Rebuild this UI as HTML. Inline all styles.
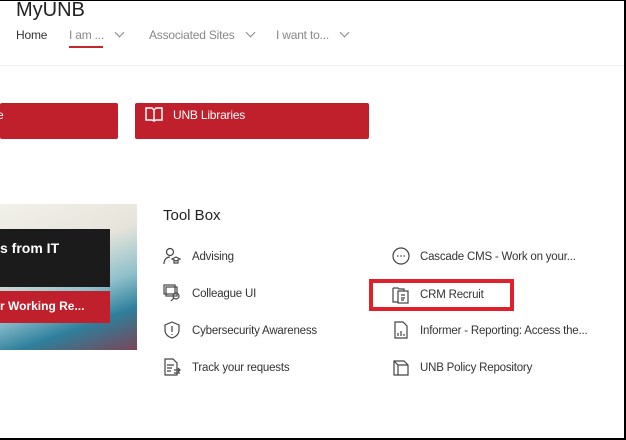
<!DOCTYPE html>
<html><head><style>
*{margin:0;padding:0;box-sizing:border-box}
body{width:626px;height:440px;overflow:hidden;background:#fff;font-family:"Liberation Sans",sans-serif;position:relative}
.frame{position:absolute;left:0;top:0;width:626px;height:440px;border:1px solid #000;border-left:none;border-right:2px solid #000;border-bottom:2px solid #000}
.a{position:absolute;white-space:nowrap}
.nav{font-size:12px;color:#888;top:28px;letter-spacing:-0.2px}
.chev{display:inline-block;width:7px;height:7px;border-right:1px solid #888;border-bottom:1px solid #888;transform:rotate(45deg);margin-left:12px;position:relative;top:-3px}
.it{font-size:11.5px;color:#333;letter-spacing:-0.2px}
.ico{position:absolute;width:18px;height:18px}
</style></head><body>
<div class="a" style="left:16px;top:-1px;font-size:20px;color:#222">MyUNB</div>
<div class="a nav" style="left:16px;color:#333">Home</div>
<div class="a nav" style="left:69px">I am ...<span class="chev"></span></div>
<div class="a" style="left:69px;top:46px;width:34px;height:2px;background:#c1272d"></div>
<div class="a nav" style="left:149px">Associated Sites<span class="chev"></span></div>
<div class="a nav" style="left:276px">I want to...<span class="chev"></span></div>
<div class="a" style="left:0;top:65px;width:626px;height:1px;background:#eee"></div>

<div class="a" style="left:0;top:103px;width:118px;height:36px;background:#c01f2c;border-radius:2px"><span style="position:absolute;left:-3px;top:5px;color:#fff;font-size:12px">e</span></div>
<div class="a" style="left:135px;top:103px;width:234px;height:36px;background:#c01f2c;border-radius:2px">
<svg style="position:absolute;left:10px;top:3px" width="18" height="16" viewBox="0 0 18 16" fill="none" stroke="#fff" stroke-width="1.5"><path d="M1 2h6l2 2 2-2h6v12h-6l-2 1-2-1H1z M9 4v11"/></svg>
<span style="position:absolute;left:38px;top:5px;color:#fff;font-size:12px;letter-spacing:-0.2px">UNB Libraries</span></div>

<div class="a" style="left:0;top:204px;width:137px;height:146px;background:linear-gradient(160deg,#f2f1ea 0%,#e6e4da 35%,#8fc0cc 60%,#2e7f9c 78%,#7a4556 100%)"></div>
<div class="a" style="left:0;top:229px;width:110px;height:58px;background:#1b1b1b"><span style="position:absolute;left:0;top:11px;color:#fff;font-size:14px;font-weight:bold">s from IT</span></div>
<div class="a" style="left:0;top:291px;width:110px;height:32px;background:#c01f2c"><span style="position:absolute;left:0;top:8px;color:#fff;font-size:12px;font-weight:bold">r Working Re...</span></div>

<div class="a" style="left:163px;top:207px;font-size:15px;color:#222">Tool Box</div>

<svg class="ico" style="left:163px;top:247px" viewBox="0 0 18 18" fill="none" stroke="#444" stroke-width="1.2"><circle cx="7" cy="5" r="3.5"/><path d="M1 17c0-5 3-7 6-7"/><path d="M9 12l4-2 4 2-4 2z M11 13v3h4v-3"/></svg>
<div class="a it" style="left:192px;top:251px">Advising</div>
<svg class="ico" style="left:163px;top:284px" viewBox="0 0 18 18" fill="none" stroke="#444" stroke-width="1.2"><rect x="1" y="1" width="11" height="9"/><rect x="3" y="3" width="11" height="9"/><circle cx="13" cy="12" r="3"/><path d="M11 14l-3 3"/></svg>
<div class="a it" style="left:192px;top:288px">Colleague UI</div>
<svg class="ico" style="left:163px;top:321px" viewBox="0 0 18 18" fill="none" stroke="#444" stroke-width="1.2"><path d="M9 1l7 3v5c0 4-3 7-7 8-4-1-7-4-7-8V4z"/><path d="M9 5v6M9 13v1"/></svg>
<div class="a it" style="left:192px;top:325px">Cybersecurity Awareness</div>
<svg class="ico" style="left:163px;top:358px" viewBox="0 0 18 18" fill="none" stroke="#444" stroke-width="1.2"><path d="M2 1h8l4 4v12H2z"/><path d="M4 7h7M4 10h5M4 13h4M11 12h6M15 10l2 2-2 2M17 15h-6"/></svg>
<div class="a it" style="left:192px;top:362px">Track your requests</div>

<svg class="ico" style="left:392px;top:247px" viewBox="0 0 18 18" fill="none" stroke="#444" stroke-width="1.2"><circle cx="9" cy="9" r="8"/><path d="M5 9h1.5M8.3 9h1.5M11.5 9H13"/></svg>
<div class="a it" style="left:420px;top:251px">Cascade CMS - Work on your...</div>
<div class="a" style="left:369px;top:279px;width:145px;height:32px;border:4px solid #e0202a"></div>
<svg class="ico" style="left:392px;top:286px" viewBox="0 0 18 18" fill="none" stroke="#444" stroke-width="1.2"><path d="M1 2h5l1 1h5v2M1 2v14h5"/><rect x="6" y="5" width="10" height="12"/><path d="M9 9h4M9 12h4M9 14h3"/></svg>
<div class="a it" style="left:420px;top:289px">CRM Recruit</div>
<svg class="ico" style="left:392px;top:321px" viewBox="0 0 18 18" fill="none" stroke="#444" stroke-width="1.2"><path d="M3 1h8l4 4v12H3z"/><path d="M6 15v-3M9 15v-5M12 15v-2"/></svg>
<div class="a it" style="left:420px;top:325px">Informer - Reporting: Access the...</div>
<svg class="ico" style="left:392px;top:358px" viewBox="0 0 18 18" fill="none" stroke="#444" stroke-width="1.2"><path d="M2 3h10l4 4v10H2z M2 3l4 4h10 M6 7v10"/></svg>
<div class="a it" style="left:420px;top:362px">UNB Policy Repository</div>

<div class="frame"></div>
</body></html>
